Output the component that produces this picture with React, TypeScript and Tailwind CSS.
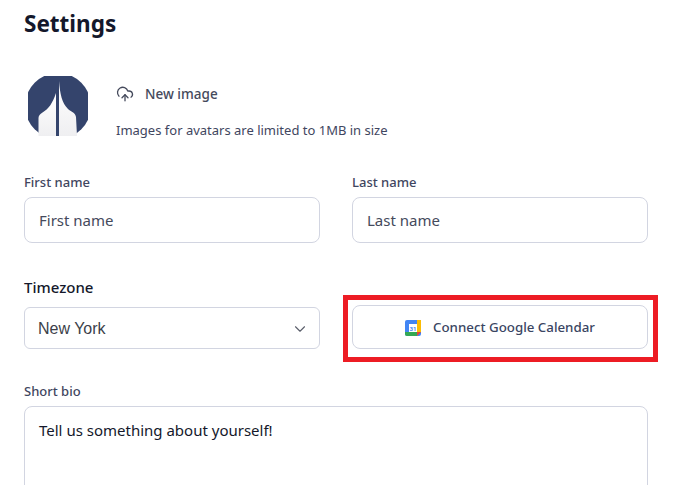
import { ChevronDown, CloudUpload } from 'lucide-react';

const Avatar = () => (
  <svg width="60" height="60" viewBox="0 0 60 60" className="shrink-0">
    <defs>
      <linearGradient id="sail" x1="0" y1="0" x2="0" y2="1">
        <stop offset="0" stopColor="#ffffff" />
        <stop offset="1" stopColor="#efeff1" />
      </linearGradient>
    </defs>
    <circle cx="30" cy="30" r="33" fill="#34446c" />
    <path d="M10.500 60V42c0-2 1.500-4 4-5.500 6-3.500 10-9 13.500-19.500V60z" fill="url(#sail)" />
    <path d="M31 5c1 13 3 22 9 28 3 3 7 3 8 8l1 19H31z" fill="url(#sail)" />
  </svg>
);

const CalendarIcon = () => (
  <svg width="16" height="16" viewBox="0 0 16 16" className="shrink-0">
    <rect x="0" y="0" width="16" height="16" rx="2" fill="#4285f4" />
    <rect x="12" y="0" width="4" height="12" fill="#fbbc04" />
    <path d="M0 12h12v4H2a2 2 0 0 1-2-2z" fill="#34a853" />
    <path d="M12 12h4l-4 4z" fill="#ea4335" />
    <rect x="4" y="4" width="8" height="8" fill="#fff" />
    <text x="8" y="10.500" textAnchor="middle" fontSize="6" fontWeight="700" fill="#4285f4" fontFamily="Roboto, sans-serif">31</text>
  </svg>
);

const Field = ({ label, placeholder }: { label: string; placeholder: string }) => (
  <div className="flex flex-col">
    <label className="mb-[5px] text-[13px] leading-[20px] font-medium text-[#3f4660]">{label}</label>
    <div className="flex h-[46px] items-center rounded-lg border border-[#d2d5e1] bg-white px-[14px] text-[15px] text-[#454a5c]">
      {placeholder}
    </div>
  </div>
);

export default function App() {
  return (
    <div className="relative h-[485px] w-[682px] overflow-hidden bg-white font-['Noto_Sans',sans-serif] text-[#1a1f36]">
      <div className="w-[672px] px-6 pt-[9px]">
        <h1 className="text-[22.500px] leading-[30px] font-bold text-[#14182b]">Settings</h1>

        {/* Avatar */}
        <div className="mt-[37px] ml-1 flex">
          <Avatar />
          <div className="ml-7 flex flex-col">
            <div className="flex h-9 items-center gap-[11px] text-[13.500px] font-medium text-[#454a5c]">
              <CloudUpload size={18} strokeWidth={1.75} className="text-[#454a5c]" />
              New image
            </div>
            <p className="mt-[9px] text-[13px] leading-[18px] text-[#3f4660]">
              Images for avatars are limited to 1MB in size
            </p>
          </div>
        </div>

        <div className="mt-[33px] grid grid-cols-2 gap-x-8">
          <Field label="First name" placeholder="First name" />
          <Field label="Last name" placeholder="Last name" />
        </div>

        <div className="mt-[34px] grid grid-cols-2 items-end gap-x-8">
          <div className="flex flex-col">
            <label className="mb-[10px] text-[15px] leading-[20px] font-medium text-[#14182b]">Timezone</label>
            <div className="flex h-[42px] items-center justify-between rounded-md border border-[#d2d5e1] bg-white pt-[1px] pr-[10px] pl-[13px] font-['Liberation_Sans',sans-serif] text-[16px] text-[#3c3f4a]">
              New York
              <ChevronDown size={18} strokeWidth={1.5} className="text-[#5b5f6b]" />
            </div>
          </div>
          <button className="flex h-11 items-center justify-center gap-3 rounded-lg border border-[#d2d5e1] bg-white pt-[1px] text-[13.300px] font-medium text-[#3a4562]">
            <CalendarIcon />
            Connect Google Calendar
          </button>
        </div>

        <label className="mt-[32px] mb-[5px] block text-[13px] leading-[20px] font-medium text-[#3f4660]">Short bio</label>
        <div className="h-[120px] rounded-lg border border-[#d2d5e1] bg-white px-[14px] pt-[13px] text-[15px] leading-[20px] text-[#14182b]">
          Tell us something about yourself!
        </div>
      </div>

      {/* red annotation box */}
      <div className="pointer-events-none absolute top-[295px] left-[343px] h-[67px] w-[315px] border-[5px] border-[#ed1c24]" />
    </div>
  );
}
